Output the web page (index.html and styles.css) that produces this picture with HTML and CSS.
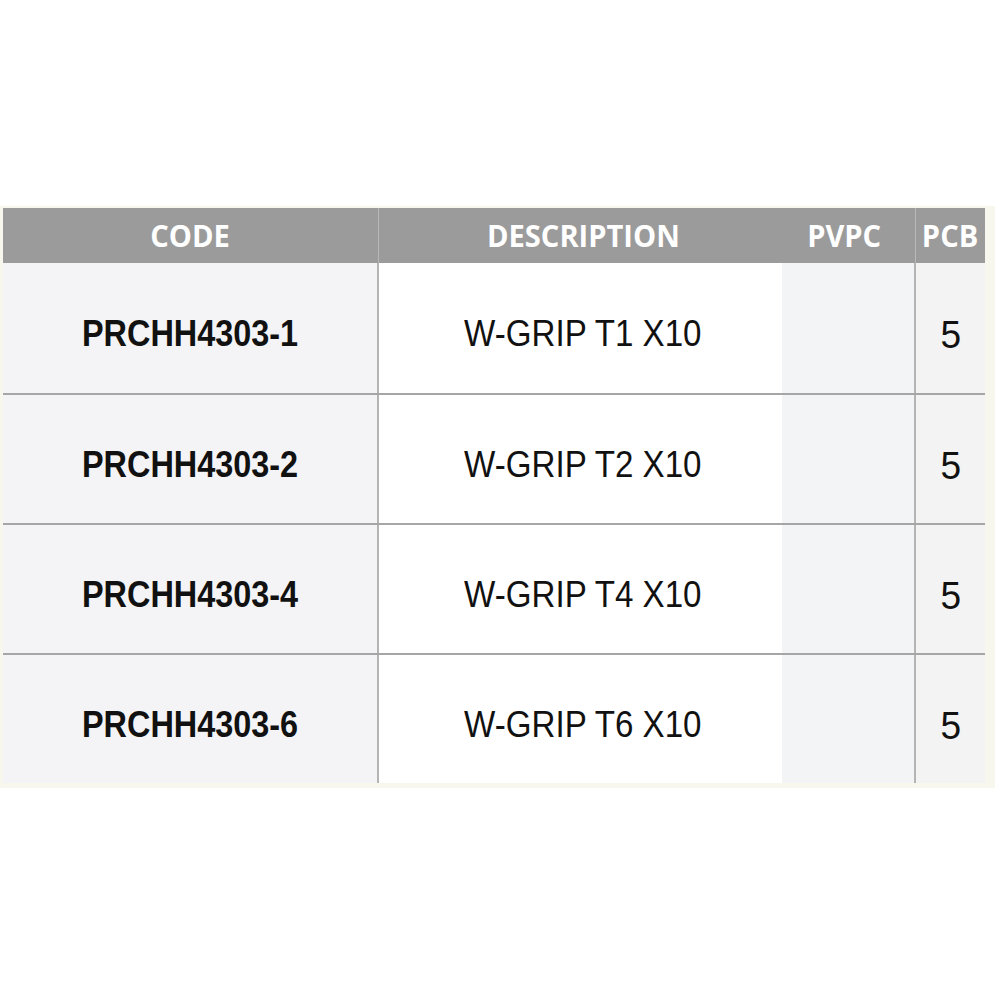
FILE: index.html
```html
<!DOCTYPE html>
<html>
<head>
<meta charset="utf-8">
<link rel="stylesheet" href="styles.css">
</head>
<body>
<div class="frame">
  <div class="table">
    <div class="row head">
      <div class="cell c-code"><span class="ht">CODE</span></div>
      <div class="cell c-desc"><span class="ht">DESCRIPTION</span></div>
      <div class="cell c-pvpc"><span class="ht">PVPC</span></div>
      <div class="cell c-pcb"><span class="ht">PCB</span></div>
    </div>
    <div class="row body">
      <div class="cell c-code"><span class="code">PRCHH4303-1</span></div>
      <div class="cell c-desc"><span class="desc">W-GRIP T1 X10</span></div>
      <div class="cell c-pvpc"></div>
      <div class="cell c-pcb"><span class="num">5</span></div>
    </div>
    <div class="row body">
      <div class="cell c-code"><span class="code">PRCHH4303-2</span></div>
      <div class="cell c-desc"><span class="desc">W-GRIP T2 X10</span></div>
      <div class="cell c-pvpc"></div>
      <div class="cell c-pcb"><span class="num">5</span></div>
    </div>
    <div class="row body">
      <div class="cell c-code"><span class="code">PRCHH4303-4</span></div>
      <div class="cell c-desc"><span class="desc">W-GRIP T4 X10</span></div>
      <div class="cell c-pvpc"></div>
      <div class="cell c-pcb"><span class="num">5</span></div>
    </div>
    <div class="row body">
      <div class="cell c-code"><span class="code">PRCHH4303-6</span></div>
      <div class="cell c-desc"><span class="desc">W-GRIP T6 X10</span></div>
      <div class="cell c-pvpc"></div>
      <div class="cell c-pcb"><span class="num">5</span></div>
    </div>
  </div>
</div>
</body>
</html>
```

FILE: styles.css
```css
html, body {
  margin: 0;
  padding: 0;
  background: #ffffff;
}

body {
  font-family: "Liberation Sans", Arial, sans-serif;
  color: #111111;
}

.frame {
  margin-top: 206px;
  width: 995px;
  padding: 2px 10px 5px 3px;
  box-sizing: border-box;
  background: #f7f7ee;
}

.table {
  display: flex;
  flex-direction: column;
}

.row {
  display: grid;
  grid-template-columns: 376px 403px 134px 69px;
}

.head {
  height: 55px;
  background: #9b9b9b;
}

.head .cell {
  border-right: 1px solid #b8b8b8;
}

.head .c-pcb {
  border-right: none;
}

.head .c-desc {
  border-right: none;
}

.body {
  height: 130px;
}

.body + .body {
  border-top: 2px solid #a6a6a6;
  height: 128px;
}

.cell {
  display: flex;
  align-items: center;
  justify-content: center;
  box-sizing: border-box;
  overflow: hidden;
}

.body .c-code {
  background: #f4f4f6;
  border-right: 2px solid #b4b4b4;
}

.body .c-desc {
  background: #ffffff;
}

.body .c-pvpc {
  background: #f3f4f6;
  border-right: 2px solid #b4b4b4;
}

.body .c-pcb {
  background: #f3f3f4;
}

.ht {
  display: inline-block;
  font-family: "Open Sans", sans-serif;
  font-weight: 700;
  font-size: 30px;
  color: #ffffff;
  transform: scaleX(0.97);
  line-height: 1;
  padding-top: 1px;
  white-space: nowrap;
}

.head .c-pvpc {
  padding-right: 8px;
}

.head .c-desc {
  padding-left: 6px;
}

.code {
  display: inline-block;
  font-weight: 700;
  font-size: 36px;
  transform: scaleX(0.9);
  line-height: 1;
  padding-top: 12px;
}

.desc {
  display: inline-block;
  font-size: 36px;
  transform: scaleX(0.92);
  line-height: 1;
  padding-top: 12px;
  padding-left: 6px;
}

.num {
  display: inline-block;
  font-size: 39px;
  transform: scaleX(0.95);
  line-height: 1;
  padding-top: 12px;
}
```
